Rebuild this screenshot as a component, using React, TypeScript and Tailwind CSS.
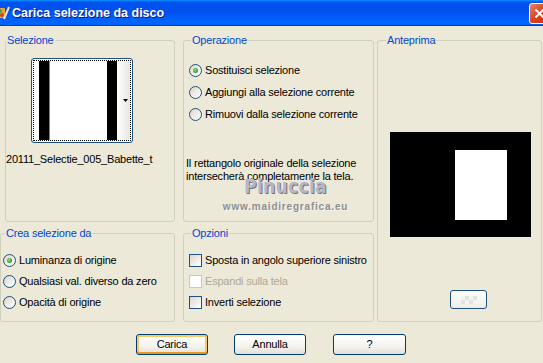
import React from "react";

const font = { fontFamily: '"Liberation Sans", Arial, sans-serif' };

function Radio({ checked }: { checked?: boolean }) {
  return (
    <div className="w-[13px] h-[13px] rounded-full border border-[#1C5180] bg-[linear-gradient(135deg,#DCD7CB,#FFFFFF)] flex items-center justify-center shrink-0">
      {checked && (
        <div className="w-[5px] h-[5px] rounded-full bg-[radial-gradient(circle_at_40%_40%,#8CE08C,#21A121_70%)]" />
      )}
    </div>
  );
}

function Check({ disabled }: { disabled?: boolean }) {
  return (
    <div
      className={
        disabled
          ? "w-[13px] h-[13px] border border-[#CAC8BB] bg-white shrink-0"
          : "w-[13px] h-[13px] border border-[#1C5180] bg-[linear-gradient(135deg,#DCD7CB,#FFFFFF)] shrink-0"
      }
    />
  );
}

function Row({ icon, label, disabled }: { icon: React.ReactNode; label: string; disabled?: boolean }) {
  return (
    <div className="flex items-center h-[16px] gap-[3px] whitespace-nowrap">
      {icon}
      <span className={disabled ? "text-[#ACA899] leading-[13px]" : "text-black leading-[13px]"}>{label}</span>
    </div>
  );
}

function Btn({ label, def, className }: { label: string; def?: boolean; className?: string }) {
  return (
    <div
      className={
        "w-[72px] h-[21px] rounded-[3px] border border-[#003C74] bg-[linear-gradient(180deg,#FFFFFF,#F4F3EE_60%,#E3E0D5)] flex items-center justify-center text-black " +
        (def ? "shadow-[inset_0_-2px_0_#E69A1B,inset_0_0_0_2px_#F8C965] " : "") +
        (className ?? "")
      }
    >
      {label}
    </div>
  );
}

export default function App() {
  return (
    <div className="w-[543px] h-[363px] bg-[#ECE9D8] overflow-hidden text-[11px] tracking-[-0.2px]" style={font}>
      {/* Title bar */}
      <div className="h-[26px] flex items-center bg-[linear-gradient(180deg,#0997FF,#0053EE_8%,#0050EE_40%,#0066FF_88%,#0066FF_93%,#005BFF_95%,#003DD7_96%,#003DD7)]">
        <svg width="16" height="16" viewBox="0 0 16 16" className="-ml-[6px] shrink-0">
          <rect x="2" y="3" width="9" height="10" rx="1" fill="#E9A13B" />
          <circle cx="6" cy="6" r="2" fill="#3AA845" />
          <circle cx="8" cy="10" r="2" fill="#D9412F" />
          <path d="M10 14 L15 2" stroke="#F2E6B5" strokeWidth="2" />
        </svg>
        <span className="ml-[2px] text-white font-bold text-[12.5px] tracking-normal [text-shadow:1px_1px_0_#0A1E7A]">
          Carica selezione da disco
        </span>
        <div className="ml-auto -mr-[7px] w-[21px] h-[21px] rounded-[3px] border border-white bg-[linear-gradient(135deg,#E8836B,#D8421F_50%,#C03515)] flex items-center justify-center">
          <svg width="11" height="11" viewBox="0 0 11 11">
            <path d="M1.5 1.5 L9.5 9.5 M9.5 1.5 L1.5 9.5" stroke="white" strokeWidth="2" />
          </svg>
        </div>
      </div>

      {/* Body */}
      <div className="flex pt-[8px]">
        {/* Column 1 */}
        <div className="flex flex-col w-[175px] gap-[5px]">
          <fieldset className="ml-[5px] w-[170px] h-[188px] border border-[#D0D0BF] rounded-[3px] min-w-0">
            <legend className="ml-0 px-[1px] leading-[13px] text-[#0046D5]">Selezione</legend>
            <div className="ml-[25px] mt-[11px] w-[102px] h-[85px] border border-[#1C5180] rounded-[3px] bg-white p-[1px]">
              <div className="h-full border border-dotted border-black flex">
                <div className="w-[5px] bg-white" />
                <div className="w-[10px] bg-black" />
                <div className="w-[1px] bg-[#808080]" />
                <div className="flex-1 bg-white" />
                <div className="w-[10px] bg-black" />
                <div className="w-[13px] bg-[linear-gradient(90deg,#FFFFFF,#E6E6E2)] flex items-center justify-end pr-[2px]">
                  <svg width="5" height="3" viewBox="0 0 5 3">
                    <path d="M0 0 H5 L2.5 3 Z" fill="black" />
                  </svg>
                </div>
              </div>
            </div>
            <div className="mt-[10px] leading-[13px] whitespace-nowrap">20111_Selectie_005_Babette_t</div>
          </fieldset>

          <fieldset className="w-[175px] h-[95px] border border-[#D0D0BF] rounded-[3px] min-w-0">
            <legend className="ml-[4px] px-[1px] leading-[13px] text-[#0046D5]">Crea selezione da</legend>
            <div className="ml-[2px] mt-[12px] flex flex-col gap-[5px]">
              <Row icon={<Radio checked />} label="Luminanza di origine" />
              <Row icon={<Radio />} label="Qualsiasi val. diverso da zero" />
              <Row icon={<Radio />} label="Opacità di origine" />
            </div>
          </fieldset>
        </div>

        {/* Column 2 */}
        <div className="flex flex-col w-[191px] ml-[8px] gap-[5px]">
          <fieldset className="relative w-[191px] h-[188px] border border-[#D0D0BF] rounded-[3px] min-w-0">
            <legend className="ml-[7px] px-[1px] leading-[13px] text-[#0046D5]">Operazione</legend>
            <div className="ml-[5px] mt-[15px] flex flex-col gap-[6px]">
              <Row icon={<Radio checked />} label="Sostituisci selezione" />
              <Row icon={<Radio />} label="Aggiungi alla selezione corrente" />
              <Row icon={<Radio />} label="Rimuovi dalla selezione corrente" />
            </div>
            <div className="ml-[2px] mt-[35px] leading-[13px]">
              Il rettangolo originale della selezione
              <br />
              intersecherà completamente la tela.
            </div>
            <div className="absolute left-0 right-0 top-[129px] flex flex-col items-center pointer-events-none">
              <div
                className="text-[19px] leading-[20px] font-bold text-[#B6B6C4] tracking-[0.3px] [text-shadow:1px_1px_0_#74747F] ml-[14px]"
                style={{ fontFamily: '"DejaVu Sans Condensed", "DejaVu Sans", sans-serif', fontStretch: "condensed" }}
              >
                Pinuccia
              </div>
              <div className="mt-[4px] text-[10px] leading-[13px] font-bold text-[#8E8E8E] tracking-[0.8px] [text-shadow:1px_1px_0_#F4F4F4] ml-[14px]">
                www.maidiregrafica.eu
              </div>
            </div>
          </fieldset>

          <fieldset className="w-[191px] h-[95px] border border-[#D0D0BF] rounded-[3px] min-w-0">
            <legend className="ml-[7px] px-[1px] leading-[13px] text-[#0046D5]">Opzioni</legend>
            <div className="ml-[5px] mt-[12px] flex flex-col gap-[5px]">
              <Row icon={<Check />} label="Sposta in angolo superiore sinistro" />
              <Row icon={<Check disabled />} label="Espandi sulla tela" disabled />
              <Row icon={<Check />} label="Inverti selezione" />
            </div>
          </fieldset>
        </div>

        {/* Column 3 */}
        <fieldset className="ml-[3px] w-[165px] h-[288px] border border-[#D0D0BF] rounded-[3px] min-w-0">
          <legend className="ml-[8px] px-[1px] leading-[13px] text-[#0046D5]">Anteprima</legend>
          <div className="ml-[12px] mt-[85px] w-[141px] h-[105px] bg-black flex items-start">
            <div className="ml-[65px] mt-[18px] w-[52px] h-[70px] bg-white" />
          </div>
          <div className="ml-[72px] mt-[53px] w-[37px] h-[19px] rounded-[3px] border border-[#1C5180] bg-[linear-gradient(180deg,#FFFFFF,#EFEDE6)] flex items-center justify-center">
            <div className="grid grid-cols-4 w-[16px] h-[8px]">
              <div className="bg-[#F4F4F4]" />
              <div className="bg-[#E2E2E2]" />
              <div className="bg-[#F4F4F4]" />
              <div className="bg-[#E2E2E2]" />
              <div className="bg-[#E2E2E2]" />
              <div className="bg-[#F4F4F4]" />
              <div className="bg-[#E2E2E2]" />
              <div className="bg-[#F4F4F4]" />
            </div>
          </div>
        </fieldset>
      </div>

      {/* Buttons */}
      <div className="flex mt-[12px] pl-[136px]">
        <Btn label="Carica" def />
        <Btn label="Annulla" className="ml-[26px]" />
        <Btn label="?" className="ml-[27px] w-[73px]" />
      </div>
    </div>
  );
}
